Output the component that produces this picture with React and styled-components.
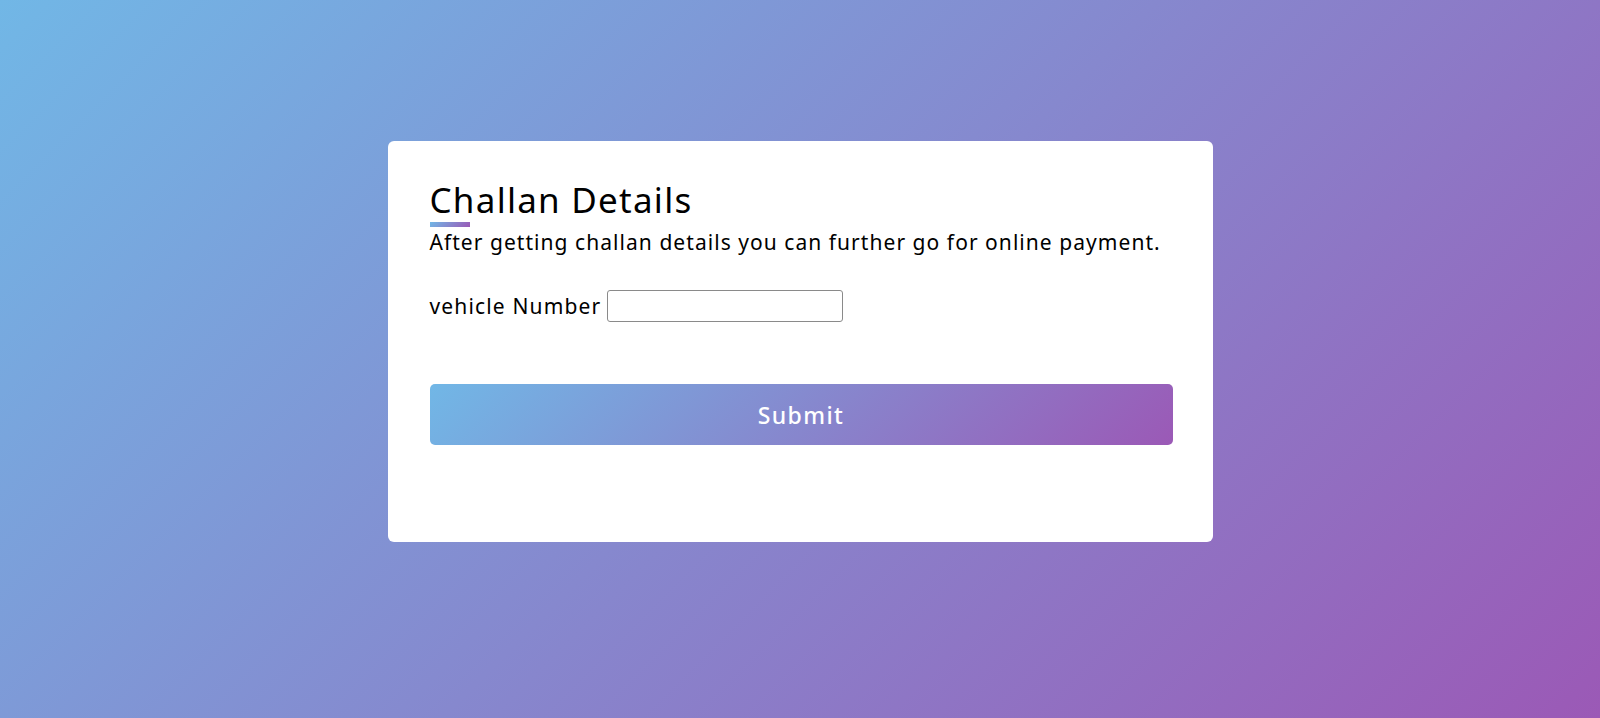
import styled, { createGlobalStyle } from 'styled-components'

const GlobalStyle = createGlobalStyle`
  * {
    box-sizing: border-box;
  }
  body {
    margin: 0;
    font-family: 'Noto Sans', 'Open Sans', sans-serif;
  }
`

const Page = styled.div`
  min-height: 100vh;
  display: flex;
  justify-content: center;
  align-items: flex-start;
  padding-top: 141px;
  background: linear-gradient(135deg, #71b7e6, #9b59b6);
`

const Card = styled.div`
  width: 825px;
  height: 401px;
  background: #fff;
  border-radius: 6px;
  padding: 38px 40px 0 42px;
`

const Title = styled.h1`
  margin: 0;
  font-size: 35px;
  font-weight: 400;
  letter-spacing: 1.25px;
  line-height: 42px;
  color: #000;
`

const Accent = styled.div`
  width: 40px;
  height: 5px;
  margin-top: 1px;
  background: linear-gradient(135deg, #71b7e6, #9b59b6);
`

const Subtitle = styled.p`
  margin: 0;
  font-size: 21px;
  letter-spacing: 1.05px;
  line-height: 30px;
  color: #000;
`

const Field = styled.div`
  display: flex;
  align-items: center;
  gap: 6px;
  margin-top: 33px;
`

const Label = styled.label`
  font-size: 21px;
  letter-spacing: 1.15px;
  color: #000;
`

const Input = styled.input`
  width: 236px;
  height: 32px;
  border: 1px solid #8a8a8a;
  border-radius: 3px;
  font-size: 16px;
  padding: 0 6px;
`

const Button = styled.button`
  display: block;
  width: 100%;
  height: 61px;
  margin-top: 62px;
  border: none;
  border-radius: 5px;
  background: linear-gradient(135deg, #71b7e6, #9b59b6);
  color: #fff;
  font-family: inherit;
  font-size: 23px;
  font-weight: 500;
  letter-spacing: 1.4px;
  cursor: pointer;
`

export default function App() {
  return (
    <>
      <GlobalStyle />
      <Page>
        <Card>
          <Title>Challan Details</Title>
          <Accent />
          <Subtitle>After getting challan details you can further go for online payment.</Subtitle>
          <Field>
            <Label htmlFor='vehicle'>vehicle Number</Label>
            <Input id='vehicle' type='text' />
          </Field>
          <Button type='submit'>Submit</Button>
        </Card>
      </Page>
    </>
  )
}
